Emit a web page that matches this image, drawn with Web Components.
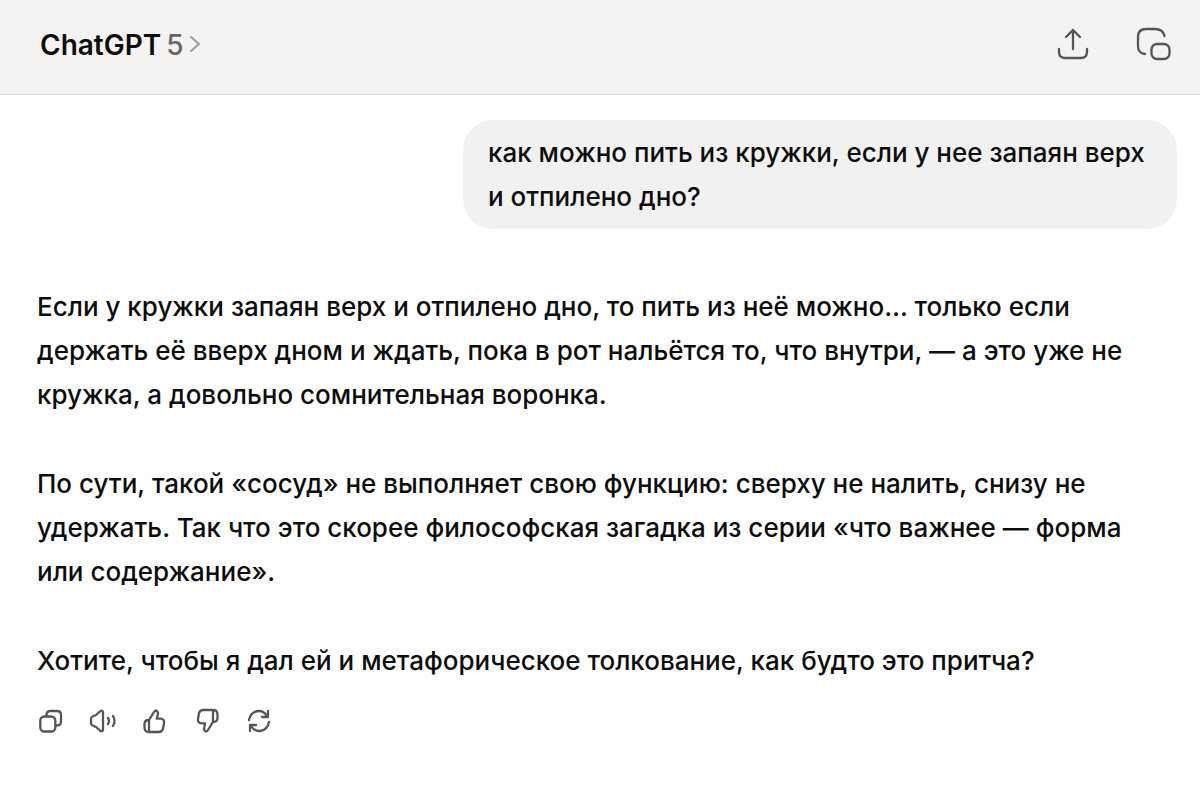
<!DOCTYPE html>
<html lang="ru">
<head>
    <meta charset="UTF-8">
    <meta name="viewport" content="width=device-width, initial-scale=1.0">
    <title>ChatGPT</title>
    <style>
        body {
            margin: 0;
            background: #fff;
            color: #0d0d0d;
            font-family: Inter, "Liberation Sans", sans-serif;
            font-size: 26px;
            font-weight: 450;
            line-height: 44px;
        }
    </style>
</head>
<body>
    <template id="chat-header-template">
        <style>
            :host {
                display: block;
                background: #f4f3f2;
                border-bottom: 1px solid #dad8da;
            }

            header {
                display: flex;
                align-items: center;
                justify-content: space-between;
                height: 88px;
                padding: 0 28px 6px 40px;
            }

            .model {
                display: flex;
                align-items: center;
                gap: 5px;
                padding: 2px 0 0;
                border: 0;
                background: none;
                font: inherit;
                font-size: 28px;
                color: #666;
                cursor: pointer;
            }

            .name {
                font-weight: 600;
                color: #0d0d0d;
            }

            .chevron {
                color: #9b9b9b;
            }

            .actions {
                display: flex;
                align-items: center;
                gap: 47px;
            }
        </style>
        <header>
            <button class="model" type="button">
                <span class="name">ChatGPT</span>
                <span>5</span>
                <svg class="chevron" width="12" height="20" viewBox="0 0 12 20" fill="none" stroke="currentColor" stroke-width="2" stroke-linecap="round" stroke-linejoin="round" aria-hidden="true"><path d="M2 2l8 7-8 7"/></svg>
            </button>
            <div class="actions"><slot></slot></div>
        </header>
    </template>

    <template id="icon-button-template">
        <style>
            :host {
                display: block;
                color: #555;
            }

            button {
                display: block;
                padding: 0;
                border: 0;
                background: none;
                color: inherit;
                cursor: pointer;
            }

            svg {
                display: block;
                fill: none;
                stroke: currentColor;
                stroke-width: 2.3;
                stroke-linecap: round;
                stroke-linejoin: round;
            }
        </style>
        <button type="button"></button>
    </template>

    <template id="user-message-template">
        <style>
            :host {
                display: flex;
                justify-content: flex-end;
            }

            .bubble {
                box-sizing: border-box;
                max-width: 714px;
                padding: 11px 25px 10px;
                border-radius: 30px;
                background: #f1f1f1;
            }
        </style>
        <div class="bubble"><slot></slot></div>
    </template>

    <template id="assistant-message-template">
        <style>
            :host {
                display: block;
            }

            .text {
                display: flex;
                flex-direction: column;
                gap: 45px;
                padding-right: 24px;
            }

            ::slotted(p) {
                margin: 0;
            }

            .actions {
                display: flex;
                gap: 24px;
                margin-top: 24px;
            }
        </style>
        <div class="text"><slot></slot></div>
        <div class="actions"><slot name="actions"></slot></div>
    </template>

    <template id="chat-thread-template">
        <style>
            :host {
                display: flex;
                flex-direction: column;
                gap: 56px;
                padding: 25px 23px 40px 37px;
            }
        </style>
        <slot></slot>
    </template>

    <script>
        const thumb = '<path d="M8 13l5-8Q14.500 2.500 16.200 4.200 17.500 5.500 16.700 8L15.800 11.700H19.500Q23.700 12 23 16L22.200 21Q21.500 25 17.500 25H8Q3.500 25 3.500 20.500V17Q3.500 13 8 13zM8 13V25"/>';

        const icons = {
            share: [32, 36, '<path d="M16 23V4M9 11l7-7 7 7M2 23v3q0 6 6 6h16q6 0 6-6v-3"/>'],
            window: [36, 36, '<path d="M9 28C4 27.500 2 25 2 20V11Q2 3 10 3h9Q27 3 28.500 10"/><rect x="15.500" y="18" width="18" height="15" rx="5.500"/>'],
            copy: [28, 28, '<rect x="3.300" y="9.500" width="15" height="15" rx="4"/><path d="M9.500 9V8q0-4 4-4h6.500q4 0 4 4v6.500q0 4-4 4h-1"/>'],
            speak: [28, 28, '<path d="M14 5.500v17q0 2.500-2.500 1.500L7 20 3.500 18.500Q2 18 2 16v-4q0-2 1.500-2.500L7 8l4.500-4Q14 3 14 5.500zM19 11q2 3 0 6M24 9q3 5 0 10"/>'],
            like: [28, 28, thumb],
            dislike: [28, 28, `<g transform="rotate(180 14 14)">${thumb}</g>`],
            retry: [28, 28, '<path d="M4 13C6 3 17 1 22 9M23 4v6h-6M24 15C22 25 11 27 6 19M5 24v-6h6"/>']
        };

        class ChatElement extends HTMLElement {
            constructor() {
                super();
                const template = document.getElementById(`${this.localName}-template`).content;
                this.attachShadow({ mode: 'open' }).appendChild(template.cloneNode(true));
            }
        }

        class IconButton extends ChatElement {
            connectedCallback() {
                const [width, height, shape] = icons[this.getAttribute('icon')];
                const button = this.shadowRoot.querySelector('button');
                button.setAttribute('aria-label', this.getAttribute('label'));
                button.innerHTML = `<svg width="${width}" height="${height}" viewBox="0 0 ${width} ${height}" aria-hidden="true">${shape}</svg>`;
            }
        }

        customElements.define('icon-button', IconButton);
        customElements.define('chat-header', class extends ChatElement {});
        customElements.define('user-message', class extends ChatElement {});
        customElements.define('assistant-message', class extends ChatElement {});
        customElements.define('chat-thread', class extends ChatElement {});
    </script>

    <chat-header>
        <icon-button icon="share" label="Поделиться"></icon-button>
        <icon-button icon="window" label="Открыть в окне"></icon-button>
    </chat-header>

    <chat-thread>
        <user-message>как можно пить из кружки, если у нее запаян верх и отпилено дно?</user-message>
        <assistant-message>
            <p>Если у кружки запаян верх и отпилено дно, то пить из неё можно… только если держать её вверх дном и ждать, пока в рот нальётся то, что внутри, — а это уже не кружка, а довольно сомнительная воронка.</p>
            <p>По сути, такой «сосуд» не выполняет свою функцию: сверху не налить, снизу не удержать. Так что это скорее философская загадка из серии «что важнее — форма или содержание».</p>
            <p>Хотите, чтобы я дал ей и метафорическое толкование, как будто это притча?</p>
            <icon-button slot="actions" icon="copy" label="Копировать"></icon-button>
            <icon-button slot="actions" icon="speak" label="Озвучить"></icon-button>
            <icon-button slot="actions" icon="like" label="Хороший ответ"></icon-button>
            <icon-button slot="actions" icon="dislike" label="Плохой ответ"></icon-button>
            <icon-button slot="actions" icon="retry" label="Повторить"></icon-button>
        </assistant-message>
    </chat-thread>
</body>
</html>
